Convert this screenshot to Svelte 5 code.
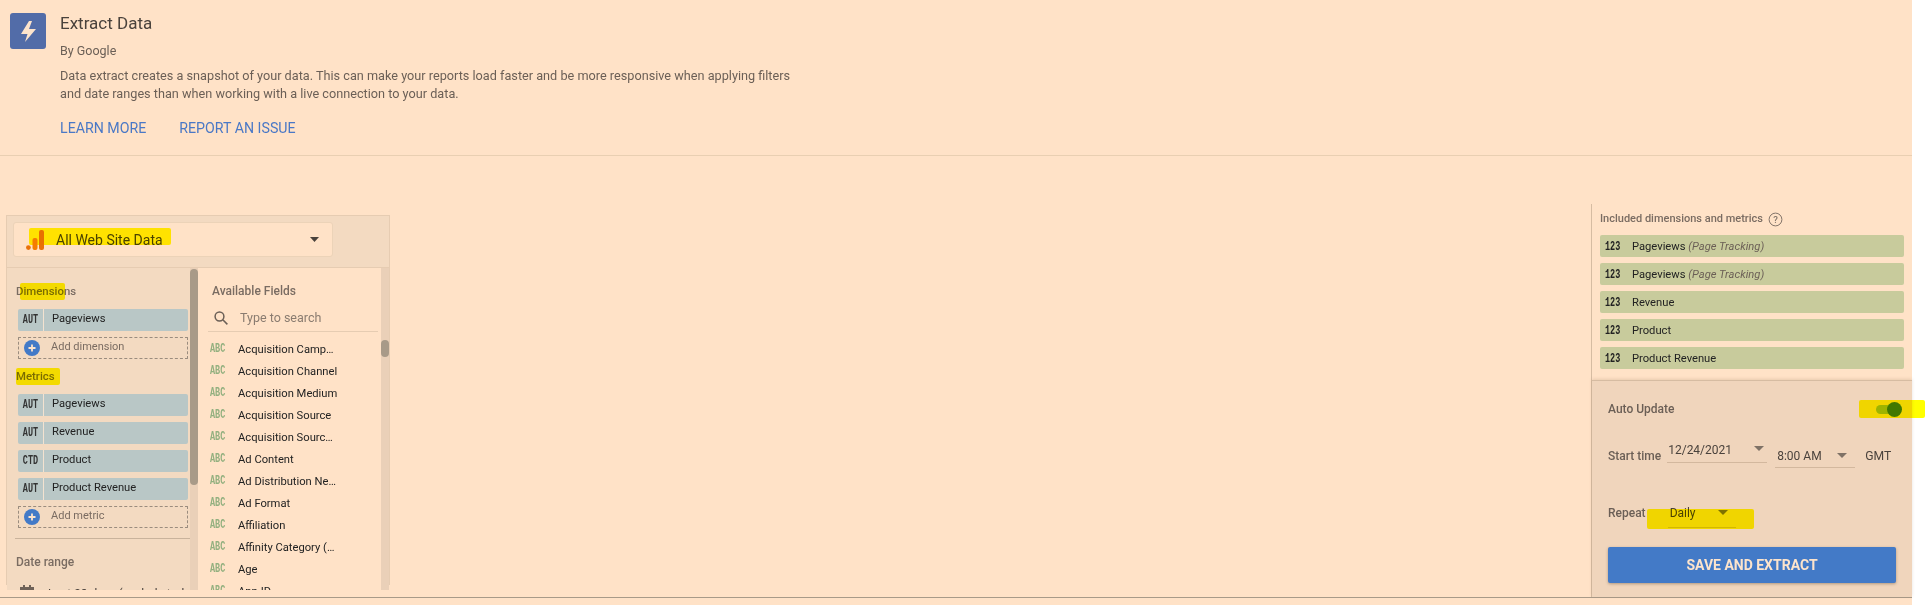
<script>
  const dimensions = [{ type: 'AUT', name: 'Pageviews' }];
  const metrics = [
    { type: 'AUT', name: 'Pageviews' },
    { type: 'AUT', name: 'Revenue' },
    { type: 'CTD', name: 'Product' },
    { type: 'AUT', name: 'Product Revenue' }
  ];
  const fields = [
    'Acquisition Camp…',
    'Acquisition Channel',
    'Acquisition Medium',
    'Acquisition Source',
    'Acquisition Sourc…',
    'Ad Content',
    'Ad Distribution Ne…',
    'Ad Format',
    'Affiliation',
    'Affinity Category (…',
    'Age',
    'App ID'
  ];
  const included = [
    { name: 'Pageviews', note: '(Page Tracking)' },
    { name: 'Pageviews', note: '(Page Tracking)' },
    { name: 'Revenue' },
    { name: 'Product' },
    { name: 'Product Revenue' }
  ];
</script>

{#snippet plus()}
  <svg class="plus" width="16" height="16" viewBox="0 0 16 16">
    <circle cx="8" cy="8" r="8" fill="#437ac7" />
    <path d="M8 4.5v7M4.5 8h7" stroke="#fde4cc" stroke-width="1.8" />
  </svg>
{/snippet}

{#snippet caret()}
  <svg class="caret" width="10" height="5" viewBox="0 0 10 5"><path d="M0 0h10L5 5z" /></svg>
{/snippet}

<div class="page">
  <header class="intro">
    <div class="bolt">
      <svg width="15" height="21" viewBox="0 0 15 21">
        <path d="M8 0 0 13h6.5L4 21l11-13H8l3-8z" fill="#fde4cc" />
      </svg>
    </div>
    <div class="intro-text">
      <h1>Extract Data</h1>
      <p class="by">By Google</p>
      <p class="desc">
        Data extract creates a snapshot of your data. This can make your reports load faster and be more responsive when applying filters<br />
        and date ranges than when working with a live connection to your data.
      </p>
      <div class="links">
        <span>LEARN MORE</span>
        <span>REPORT AN ISSUE</span>
      </div>
    </div>
  </header>

  <main class="work">
    <section class="source">
      <div class="source-head">
        <div class="select">
          <svg class="ga" width="18" height="20" viewBox="0 0 18 20">
            <rect x="13" y="0" width="5" height="20" rx="2" fill="#e8710a" />
            <rect x="6.5" y="8" width="5" height="12" rx="2" fill="#f57c00" />
            <circle cx="2.4" cy="17.6" r="2.4" fill="#e8710a" />
          </svg>
          <span class="select-name">All Web Site Data</span>
          <svg class="select-caret" width="9" height="5" viewBox="0 0 9 5"><path d="M0 0h9L4.5 5z" /></svg>
        </div>
        <i class="mark mark-source"></i>
      </div>

      <div class="columns">
        <div class="config">
          <div class="config-body">
            <h2 class="dim-title">Dimensions<i class="mark mark-dim"></i></h2>
            {#each dimensions as d}
              <div class="chip"><b>{d.type}</b><span>{d.name}</span></div>
            {/each}
            <div class="add">{@render plus()}<span>Add dimension</span></div>

            <h2 class="met-title">Metrics<i class="mark mark-met"></i></h2>
            {#each metrics as m}
              <div class="chip"><b>{m.type}</b><span>{m.name}</span></div>
            {/each}
            <div class="add">{@render plus()}<span>Add metric</span></div>

            <hr />
            <h2 class="date-title">Date range</h2>
            <div class="date-row">
              <svg width="14" height="15" viewBox="0 0 14 15">
                <path d="M3 0h2v2h4V0h2v2h3v13H0V2h3z" fill="#6f6258" />
              </svg>
              <span>Last 28 days (exclude today)</span>
            </div>
          </div>
          <div class="track"><div class="thumb thumb-config"></div></div>
        </div>

        <div class="available">
          <div class="available-body">
            <h2 class="avail-title">Available Fields</h2>
            <div class="search">
              <svg width="14" height="14" viewBox="0 0 14 14" fill="none" stroke="#6b5f56" stroke-width="1.5">
                <circle cx="5.5" cy="5.5" r="4.4" />
                <path d="m8.8 8.8 4.6 4.6" />
              </svg>
              <span>Type to search</span>
            </div>
            <div class="field-list">
              {#each fields as f}
                <div class="field"><b>ABC</b><span>{f}</span></div>
              {/each}
            </div>
          </div>
          <div class="track"><div class="thumb thumb-fields"></div></div>
        </div>
      </div>
    </section>

    <aside class="side">
      <div class="included">
        <h2 class="inc-title">
          Included dimensions and metrics
          <svg width="15" height="15" viewBox="0 0 15 15">
            <circle cx="7.5" cy="7.5" r="6.4" fill="none" stroke="#84756a" />
            <text x="7.5" y="10.8" text-anchor="middle" font-size="9.5" fill="#84756a" font-family="Roboto">?</text>
          </svg>
        </h2>
        {#each included as row}
          <div class="inc-row">
            <b>123</b>
            <span>{row.name}{#if row.note}&nbsp;<em>{row.note}</em>{/if}</span>
          </div>
        {/each}
      </div>

      <div class="schedule">
        <div class="auto">
          <span class="lab">Auto Update</span>
          <div class="toggle"><i class="knob"></i></div>
          <i class="mark mark-toggle"></i>
        </div>

        <div class="start">
          <span class="lab">Start time</span>
          <div class="drop drop-date"><span>12/24/2021</span>{@render caret()}</div>
          <div class="drop drop-time"><span>8:00 AM</span>{@render caret()}</div>
          <span class="gmt">GMT</span>
        </div>

        <div class="repeat">
          <span class="lab">Repeat</span>
          <div class="drop drop-repeat"><span>Daily</span>{@render caret()}</div>
          <i class="mark mark-repeat"></i>
        </div>

        <button class="save" type="button">SAVE AND EXTRACT</button>
      </div>
    </aside>
  </main>
</div>

<style>
  :global(body) {
    background: #fff;
    overflow: hidden;
  }

  .page {
    position: relative;
    width: 1912px;
    height: 605px;
    background: #ffe2c7;
    font-family: Roboto, sans-serif;
    color: #6b5f56;
  }

  h1, h2, p, hr {
    margin: 0;
  }

  .mark {
    position: absolute;
    background: #ffff00;
    mix-blend-mode: multiply;
    pointer-events: none;
    border-radius: 2px;
  }

  /* top intro */
  .intro {
    display: flex;
    box-sizing: border-box;
    height: 156px;
    padding: 13px 0 0 10px;
    border-bottom: 1px solid #e9cfb2;
  }

  .bolt {
    display: flex;
    align-items: center;
    justify-content: center;
    width: 36px;
    height: 36px;
    border-radius: 3px;
    background: #526ca8;
    margin-right: 14px;
  }

  h1 {
    margin-top: 1px;
    font-size: 17px;
    font-weight: 400;
    line-height: 18px;
    color: #4a423c;
  }

  .by {
    margin-top: 11px;
    font-size: 12.5px;
    line-height: 16px;
  }

  .desc {
    margin-top: 8px;
    font-size: 12.7px;
    line-height: 18px;
    white-space: nowrap;
  }

  .links {
    display: flex;
    gap: 33px;
    margin-top: 17px;
    font-size: 14.2px;
    line-height: 17px;
    color: #4a78c6;
  }

  /* main area */
  .work {
    display: flex;
    justify-content: space-between;
    box-sizing: border-box;
    height: 442px;
    border-bottom: 1px solid #a89a88;
  }

  .source {
    position: relative;
    box-sizing: border-box;
    width: 384px;
    height: 370px;
    margin: 59px 0 0 6px;
    border: 1px solid #e6ccb2;
    background: #f3dac1;
  }

  .source-head {
    box-sizing: border-box;
    height: 52px;
    padding: 6px 0 0 6px;
    border-bottom: 1px solid #e6ccb2;
  }

  .select {
    display: flex;
    align-items: center;
    box-sizing: border-box;
    width: 320px;
    height: 35px;
    padding: 0 13px 0 12px;
    border: 1px solid #ecd3b8;
    border-radius: 3px;
    background: #ffe2c7;
  }

  .select-name {
    margin-left: 12px;
    flex: 1;
    font-size: 14px;
    color: #4a423c;
  }

  .select-caret path {
    fill: #4a423c;
  }

  .mark-source {
    left: 22px;
    top: 12px;
    width: 142px;
    height: 17px;
  }

  .columns {
    display: flex;
    height: 322px;
    overflow: hidden;
  }

  .config {
    display: flex;
    width: 191px;
    background: #f3dac1;
  }

  .config-body {
    flex: 1;
    min-width: 0;
    padding: 0 0 0 11px;
  }

  h2 {
    position: relative;
    font-size: 12px;
    font-weight: 500;
    line-height: 14px;
    color: #7a6c62;
  }

  .dim-title {
    display: inline-block;
    margin: 16px 0 11px -2px;
    font-size: 11.4px;
  }

  .mark-dim {
    left: 4px;
    top: -1px;
    width: 45px;
    height: 17px;
  }

  .met-title {
    margin: 10px 0 11px -2px;
    display: inline-block;
    font-size: 11.4px;
  }

  .mark-met {
    left: 0;
    top: -1px;
    width: 44px;
    height: 17px;
  }

  .chip {
    display: flex;
    box-sizing: border-box;
    width: 170px;
    height: 22px;
    margin-bottom: 6px;
    border-radius: 2px;
    background: #b9c7c6;
    font-size: 11.2px;
    line-height: 20px;
    color: #222;
  }

  .chip b {
    width: 25px;
    flex: none;
    font-family: "Liberation Mono", monospace;
    font-size: 8.5px;
    line-height: 22px;
    text-align: center;
    color: #333;
    transform: scaleY(1.4);
  }

  .chip span {
    flex: 1;
    padding-left: 8px;
    border-left: 1px solid #f3e2d0;
  }

  .add {
    display: flex;
    align-items: center;
    box-sizing: border-box;
    width: 170px;
    height: 22px;
    padding-left: 5px;
    border: 1px dashed #9a8c7e;
    border-radius: 1px;
    font-size: 11px;
    color: #7a6c62;
  }

  .add span {
    margin: -3px 0 0 11px;
  }

  hr {
    width: 182px;
    margin: 10px 0 0 -3px;
    border: 0;
    border-top: 1px solid #c9b39c;
  }

  .date-title {
    margin: 16px 0 0 -2px;
  }

  .date-row {
    display: flex;
    gap: 14px;
    margin: 18px 0 0 2px;
    font-size: 12px;
    white-space: nowrap;
    color: #4a423c;
  }

  .date-row svg {
    flex: none;
    margin-top: -2px;
  }

  .track {
    width: 8px;
    flex: none;
    background: #ead0b8;
  }

  .thumb {
    border-radius: 4px;
    background: #a89a88;
  }

  .thumb-config {
    height: 216px;
    margin-top: 1px;
  }

  .thumb-fields {
    height: 17px;
    margin-top: 72px;
  }

  .available {
    display: flex;
    flex: 1;
    background: #ffe2c7;
  }

  .available-body {
    flex: 1;
    min-width: 0;
    padding: 0 3px 0 10px;
  }

  .avail-title {
    margin: 16px 0 0 4px;
  }

  .search {
    display: flex;
    align-items: center;
    box-sizing: border-box;
    height: 26px;
    margin-top: 8px;
    padding: 0 0 2px 6px;
    border-bottom: 1px solid #e6ccb2;
    font-size: 12.5px;
    color: #8a7c70;
  }

  .search span {
    margin-left: 12px;
  }

  .field-list {
    padding-top: 6px;
  }

  .field {
    display: flex;
    align-items: center;
    height: 22px;
    font-size: 11.2px;
    color: #222;
  }

  .field b {
    width: 28px;
    flex: none;
    margin-left: 2px;
    font-family: "Liberation Mono", monospace;
    font-size: 8.5px;
    color: #93b07f;
    transform: scaleY(1.4);
  }

  /* right panel */
  .side {
    display: flex;
    flex-direction: column;
    box-sizing: border-box;
    width: 321px;
    margin-top: 48px;
    border-left: 1px solid #d6bca2;
  }

  .included {
    box-sizing: border-box;
    height: 176px;
    padding: 8px 8px 0 8px;
  }

  .inc-title {
    display: flex;
    align-items: center;
    gap: 5px;
    margin-bottom: 9px;
    font-size: 11px;
    height: 14px;
  }

  .inc-row {
    display: flex;
    align-items: center;
    height: 22px;
    margin-bottom: 6px;
    border-radius: 2px;
    background: #c8cb9c;
    font-size: 11.2px;
    color: #222;
  }

  .inc-row b {
    width: 32px;
    flex: none;
    padding: 2px 0 0 5px;
    box-sizing: border-box;
    font-family: "Liberation Mono", monospace;
    font-size: 8.5px;
    transform: scaleY(1.4);
  }

  .inc-row em {
    color: #6b5f56;
  }

  .schedule {
    flex: 1;
    padding: 0 16px;
    border-top: 1px solid #d6bca2;
    background: #f0d5bc;
    box-shadow: 0 -1px 3px rgba(120, 90, 60, 0.18);
  }

  .lab {
    font-size: 12px;
    font-weight: 500;
    color: #6b5f56;
  }

  .auto {
    position: relative;
    display: flex;
    align-items: center;
    justify-content: space-between;
    height: 18px;
    margin-top: 19px;
  }

  .toggle {
    position: relative;
    width: 20px;
    height: 9px;
    border-radius: 5px;
    background: #9db4de;
  }

  .knob {
    position: absolute;
    right: -6px;
    top: -3px;
    width: 15px;
    height: 15px;
    border-radius: 50%;
    background: #4078c8;
  }

  .mark-toggle {
    left: 251px;
    top: 0;
    width: 66px;
    height: 18px;
  }

  .start {
    display: flex;
    align-items: center;
    margin-top: 27px;
    height: 22px;
  }

  .drop {
    position: relative;
    display: flex;
    align-items: center;
    justify-content: space-between;
    box-sizing: border-box;
    font-size: 12px;
    color: #4a423c;
    border-bottom: 1px solid #d3b89e;
  }

  .caret path {
    fill: #7f7266;
  }

  .drop-date {
    width: 100px;
    height: 21px;
    margin: -8px 0 0 6px;
    padding: 0 3px 4px 1px;
  }

  .drop-date .caret {
    margin-top: -2px;
  }

  .drop-time {
    width: 80px;
    height: 24px;
    margin: 0 0 0 8px;
    padding: 0 8px 0 2px;
  }

  .gmt {
    margin-left: 10px;
    font-size: 12.2px;
    color: #4a423c;
  }

  .repeat {
    position: relative;
    display: flex;
    align-items: center;
    height: 20px;
    margin-top: 36px;
  }

  .drop-repeat {
    width: 68px;
    height: 24px;
    margin: 6px 0 0 22px;
    padding: 0 8px 6px 2px;
  }

  .mark-repeat {
    left: 39px;
    top: 6px;
    width: 107px;
    height: 20px;
  }

  .save {
    display: block;
    width: 288px;
    height: 36px;
    margin-top: 24px;
    border: 0;
    border-radius: 2px;
    background: #437ac7;
    box-shadow: 0 1px 3px rgba(80, 60, 40, 0.4);
    font-family: Roboto, sans-serif;
    font-size: 14px;
    font-weight: 700;
    color: #fde4cc;
  }
</style>
